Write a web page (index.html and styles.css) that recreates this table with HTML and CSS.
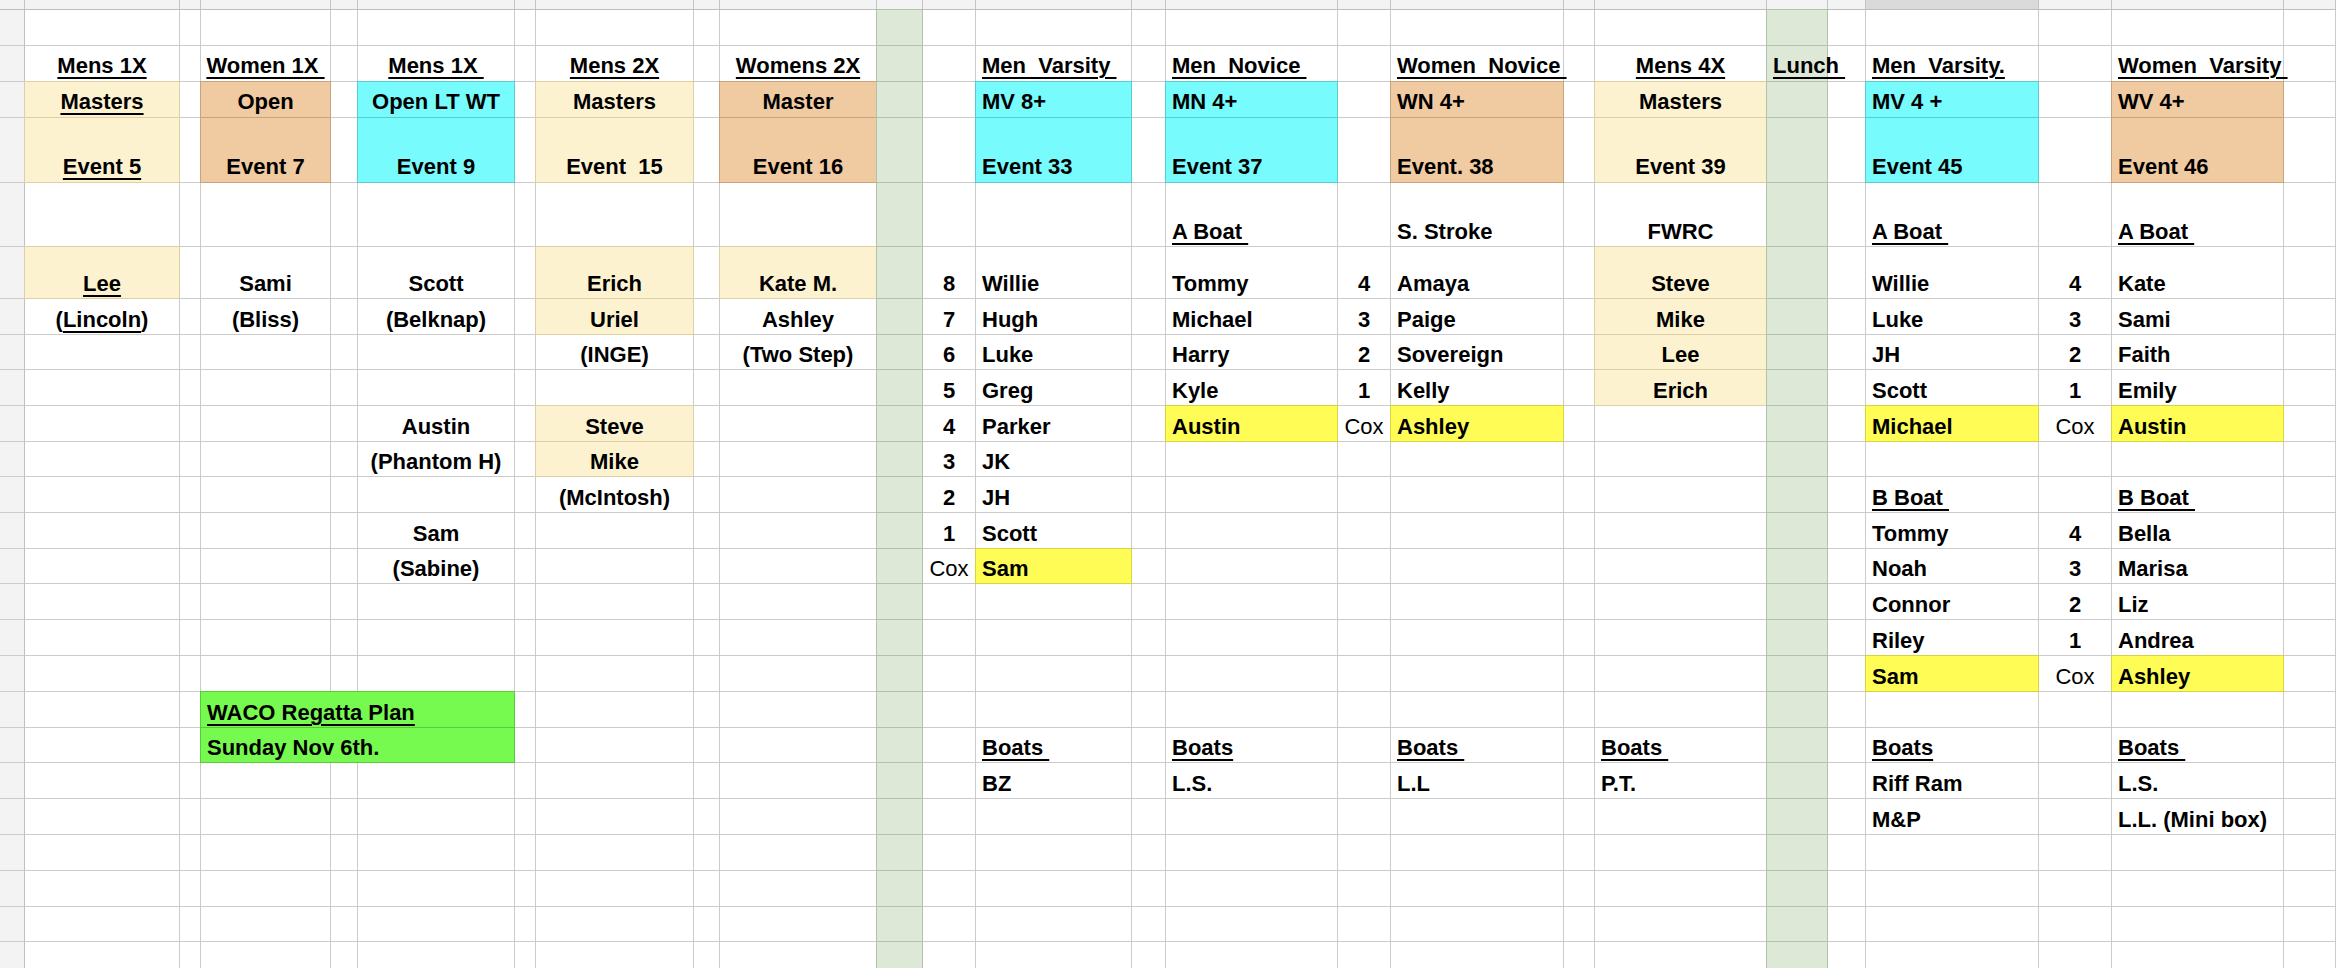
FILE: index.html
```html
<!DOCTYPE html>
<html lang="en">
<head>
<meta charset="utf-8">
<title>WACO Regatta Plan</title>
<link rel="stylesheet" href="styles.css">
</head>
<body>
<div class="sheet">
  <div class="row hd">
    <div class="c hc"></div><div class="c hc"></div><div class="c hc"></div><div class="c hc"></div><div class="c hc"></div><div class="c hc"></div><div class="c hc"></div><div class="c hc"></div><div class="c hc"></div><div class="c hc"></div><div class="c hc"></div><div class="c hc"></div><div class="c hc"></div><div class="c hc"></div><div class="c hc"></div><div class="c hc"></div><div class="c hc"></div><div class="c hc"></div><div class="c hc"></div><div class="c hc"></div><div class="c hc"></div><div class="c hc sel"></div><div class="c hc"></div><div class="c hc"></div><div class="c hc"></div>
  </div>
  <div class="row">
    <div class="c rh"></div><div class="c"></div><div class="c"></div><div class="c"></div><div class="c"></div><div class="c"></div><div class="c"></div><div class="c"></div><div class="c"></div><div class="c"></div><div class="c lg"></div><div class="c"></div><div class="c"></div><div class="c"></div><div class="c"></div><div class="c"></div><div class="c"></div><div class="c"></div><div class="c"></div><div class="c lg"></div><div class="c"></div><div class="c"></div><div class="c"></div><div class="c"></div><div class="c"></div>
  </div>
  <div class="row top">
    <div class="c rh"></div>
    <div class="c ctr"><span class="u">Mens 1X</span></div>
    <div class="c"></div>
    <div class="c ctr"><span class="u">Women 1X </span></div>
    <div class="c"></div>
    <div class="c ctr"><span class="u">Mens 1X </span></div>
    <div class="c"></div>
    <div class="c ctr"><span class="u">Mens 2X</span></div>
    <div class="c"></div>
    <div class="c ctr"><span class="u">Womens 2X</span></div>
    <div class="c lg"></div>
    <div class="c"></div>
    <div class="c"><span class="u">Men  Varsity </span></div>
    <div class="c"></div>
    <div class="c"><span class="u">Men  Novice </span></div>
    <div class="c"></div>
    <div class="c"><span class="u">Women  Novice </span></div>
    <div class="c"></div>
    <div class="c ctr"><span class="u">Mens 4X</span></div>
    <div class="c lg"><span class="u">Lunch </span></div>
    <div class="c"></div>
    <div class="c"><span class="u">Men  Varsity.</span></div>
    <div class="c"></div>
    <div class="c"><span class="u">Women  Varsity </span></div>
    <div class="c"></div>
  </div>
  <div class="row top">
    <div class="c rh"></div>
    <div class="c ctr ly"><span class="u">Masters</span></div>
    <div class="c"></div>
    <div class="c ctr or">Open</div>
    <div class="c"></div>
    <div class="c ctr cy">Open LT WT</div>
    <div class="c"></div>
    <div class="c ctr ly">Masters</div>
    <div class="c"></div>
    <div class="c ctr or">Master</div>
    <div class="c lg"></div>
    <div class="c"></div>
    <div class="c cy">MV 8+</div>
    <div class="c"></div>
    <div class="c cy">MN 4+</div>
    <div class="c"></div>
    <div class="c or">WN 4+</div>
    <div class="c"></div>
    <div class="c ctr ly">Masters</div>
    <div class="c lg"></div>
    <div class="c"></div>
    <div class="c cy">MV 4 +</div>
    <div class="c"></div>
    <div class="c or">WV 4+</div>
    <div class="c"></div>
  </div>
  <div class="row top h65">
    <div class="c rh"></div>
    <div class="c ctr ly"><span class="u">Event 5</span></div>
    <div class="c"></div>
    <div class="c ctr or">Event 7</div>
    <div class="c"></div>
    <div class="c ctr cy">Event 9</div>
    <div class="c"></div>
    <div class="c ctr ly">Event  15</div>
    <div class="c"></div>
    <div class="c ctr or">Event 16</div>
    <div class="c lg"></div>
    <div class="c"></div>
    <div class="c cy">Event 33</div>
    <div class="c"></div>
    <div class="c cy">Event 37</div>
    <div class="c"></div>
    <div class="c or">Event. 38</div>
    <div class="c"></div>
    <div class="c ctr ly">Event 39</div>
    <div class="c lg"></div>
    <div class="c"></div>
    <div class="c cy">Event 45</div>
    <div class="c"></div>
    <div class="c or">Event 46</div>
    <div class="c"></div>
  </div>
  <div class="row h64">
    <div class="c rh"></div><div class="c"></div><div class="c"></div><div class="c"></div><div class="c"></div><div class="c"></div><div class="c"></div><div class="c"></div><div class="c"></div><div class="c"></div><div class="c lg"></div><div class="c"></div><div class="c"></div><div class="c"></div>
    <div class="c"><span class="u">A Boat </span></div>
    <div class="c"></div>
    <div class="c">S. Stroke</div>
    <div class="c"></div>
    <div class="c ctr">FWRC</div>
    <div class="c lg"></div>
    <div class="c"></div>
    <div class="c"><span class="u">A Boat </span></div>
    <div class="c"></div>
    <div class="c"><span class="u">A Boat </span></div>
    <div class="c"></div>
  </div>
  <div class="row h52">
    <div class="c rh"></div>
    <div class="c ctr ly"><span class="u">Lee</span></div>
    <div class="c"></div>
    <div class="c ctr">Sami</div>
    <div class="c"></div>
    <div class="c ctr">Scott</div>
    <div class="c"></div>
    <div class="c ctr ly">Erich</div>
    <div class="c"></div>
    <div class="c ctr ly">Kate M.</div>
    <div class="c lg"></div>
    <div class="c ctr">8</div>
    <div class="c">Willie</div>
    <div class="c"></div>
    <div class="c">Tommy</div>
    <div class="c ctr">4</div>
    <div class="c">Amaya</div>
    <div class="c"></div>
    <div class="c ctr ly">Steve</div>
    <div class="c lg"></div>
    <div class="c"></div>
    <div class="c">Willie</div>
    <div class="c ctr">4</div>
    <div class="c">Kate</div>
    <div class="c"></div>
  </div>
  <div class="row">
    <div class="c rh"></div>
    <div class="c ctr"><span>(<span class="u">Lincoln</span>)</span></div>
    <div class="c"></div>
    <div class="c ctr">(Bliss)</div>
    <div class="c"></div>
    <div class="c ctr">(Belknap)</div>
    <div class="c"></div>
    <div class="c ctr ly">Uriel</div>
    <div class="c"></div>
    <div class="c ctr">Ashley</div>
    <div class="c lg"></div>
    <div class="c ctr">7</div>
    <div class="c">Hugh</div>
    <div class="c"></div>
    <div class="c">Michael</div>
    <div class="c ctr">3</div>
    <div class="c">Paige</div>
    <div class="c"></div>
    <div class="c ctr ly">Mike</div>
    <div class="c lg"></div>
    <div class="c"></div>
    <div class="c">Luke</div>
    <div class="c ctr">3</div>
    <div class="c">Sami</div>
    <div class="c"></div>
  </div>
  <div class="row h35">
    <div class="c rh"></div><div class="c"></div><div class="c"></div><div class="c"></div><div class="c"></div><div class="c"></div><div class="c"></div>
    <div class="c ctr">(INGE)</div>
    <div class="c"></div>
    <div class="c ctr">(Two Step)</div>
    <div class="c lg"></div>
    <div class="c ctr">6</div>
    <div class="c">Luke</div>
    <div class="c"></div>
    <div class="c">Harry</div>
    <div class="c ctr">2</div>
    <div class="c">Sovereign</div>
    <div class="c"></div>
    <div class="c ctr ly">Lee</div>
    <div class="c lg"></div>
    <div class="c"></div>
    <div class="c">JH</div>
    <div class="c ctr">2</div>
    <div class="c">Faith</div>
    <div class="c"></div>
  </div>
  <div class="row">
    <div class="c rh"></div><div class="c"></div><div class="c"></div><div class="c"></div><div class="c"></div><div class="c"></div><div class="c"></div><div class="c"></div><div class="c"></div><div class="c"></div><div class="c lg"></div>
    <div class="c ctr">5</div>
    <div class="c">Greg</div>
    <div class="c"></div>
    <div class="c">Kyle</div>
    <div class="c ctr">1</div>
    <div class="c">Kelly</div>
    <div class="c"></div>
    <div class="c ctr ly">Erich</div>
    <div class="c lg"></div>
    <div class="c"></div>
    <div class="c">Scott</div>
    <div class="c ctr">1</div>
    <div class="c">Emily</div>
    <div class="c"></div>
  </div>
  <div class="row">
    <div class="c rh"></div><div class="c"></div><div class="c"></div><div class="c"></div><div class="c"></div>
    <div class="c ctr">Austin</div>
    <div class="c"></div>
    <div class="c ctr ly">Steve</div>
    <div class="c"></div><div class="c"></div><div class="c lg"></div>
    <div class="c ctr">4</div>
    <div class="c">Parker</div>
    <div class="c"></div>
    <div class="c yl">Austin</div>
    <div class="c ctr cox">Cox</div>
    <div class="c yl">Ashley</div>
    <div class="c"></div><div class="c"></div><div class="c lg"></div><div class="c"></div>
    <div class="c yl">Michael</div>
    <div class="c ctr cox">Cox</div>
    <div class="c yl">Austin</div>
    <div class="c"></div>
  </div>
  <div class="row h35">
    <div class="c rh"></div><div class="c"></div><div class="c"></div><div class="c"></div><div class="c"></div>
    <div class="c ctr">(Phantom H)</div>
    <div class="c"></div>
    <div class="c ctr ly">Mike</div>
    <div class="c"></div><div class="c"></div><div class="c lg"></div>
    <div class="c ctr">3</div>
    <div class="c">JK</div>
    <div class="c"></div><div class="c"></div><div class="c"></div><div class="c"></div><div class="c"></div><div class="c"></div><div class="c lg"></div><div class="c"></div><div class="c"></div><div class="c"></div><div class="c"></div><div class="c"></div>
  </div>
  <div class="row">
    <div class="c rh"></div><div class="c"></div><div class="c"></div><div class="c"></div><div class="c"></div><div class="c"></div><div class="c"></div>
    <div class="c ctr">(McIntosh)</div>
    <div class="c"></div><div class="c"></div><div class="c lg"></div>
    <div class="c ctr">2</div>
    <div class="c">JH</div>
    <div class="c"></div><div class="c"></div><div class="c"></div><div class="c"></div><div class="c"></div><div class="c"></div><div class="c lg"></div><div class="c"></div>
    <div class="c"><span class="u">B Boat </span></div>
    <div class="c"></div>
    <div class="c"><span class="u">B Boat </span></div>
    <div class="c"></div>
  </div>
  <div class="row">
    <div class="c rh"></div><div class="c"></div><div class="c"></div><div class="c"></div><div class="c"></div>
    <div class="c ctr">Sam</div>
    <div class="c"></div><div class="c"></div><div class="c"></div><div class="c"></div><div class="c lg"></div>
    <div class="c ctr">1</div>
    <div class="c">Scott</div>
    <div class="c"></div><div class="c"></div><div class="c"></div><div class="c"></div><div class="c"></div><div class="c"></div><div class="c lg"></div><div class="c"></div>
    <div class="c">Tommy</div>
    <div class="c ctr">4</div>
    <div class="c">Bella</div>
    <div class="c"></div>
  </div>
  <div class="row h35">
    <div class="c rh"></div><div class="c"></div><div class="c"></div><div class="c"></div><div class="c"></div>
    <div class="c ctr">(Sabine)</div>
    <div class="c"></div><div class="c"></div><div class="c"></div><div class="c"></div><div class="c lg"></div>
    <div class="c ctr cox">Cox</div>
    <div class="c yl">Sam</div>
    <div class="c"></div><div class="c"></div><div class="c"></div><div class="c"></div><div class="c"></div><div class="c"></div><div class="c lg"></div><div class="c"></div>
    <div class="c">Noah</div>
    <div class="c ctr">3</div>
    <div class="c">Marisa</div>
    <div class="c"></div>
  </div>
  <div class="row">
    <div class="c rh"></div><div class="c"></div><div class="c"></div><div class="c"></div><div class="c"></div><div class="c"></div><div class="c"></div><div class="c"></div><div class="c"></div><div class="c"></div><div class="c lg"></div><div class="c"></div><div class="c"></div><div class="c"></div><div class="c"></div><div class="c"></div><div class="c"></div><div class="c"></div><div class="c"></div><div class="c lg"></div><div class="c"></div>
    <div class="c">Connor</div>
    <div class="c ctr">2</div>
    <div class="c">Liz</div>
    <div class="c"></div>
  </div>
  <div class="row">
    <div class="c rh"></div><div class="c"></div><div class="c"></div><div class="c"></div><div class="c"></div><div class="c"></div><div class="c"></div><div class="c"></div><div class="c"></div><div class="c"></div><div class="c lg"></div><div class="c"></div><div class="c"></div><div class="c"></div><div class="c"></div><div class="c"></div><div class="c"></div><div class="c"></div><div class="c"></div><div class="c lg"></div><div class="c"></div>
    <div class="c">Riley</div>
    <div class="c ctr">1</div>
    <div class="c">Andrea</div>
    <div class="c"></div>
  </div>
  <div class="row">
    <div class="c rh"></div><div class="c"></div><div class="c"></div><div class="c"></div><div class="c"></div><div class="c"></div><div class="c"></div><div class="c"></div><div class="c"></div><div class="c"></div><div class="c lg"></div><div class="c"></div><div class="c"></div><div class="c"></div><div class="c"></div><div class="c"></div><div class="c"></div><div class="c"></div><div class="c"></div><div class="c lg"></div><div class="c"></div>
    <div class="c yl">Sam</div>
    <div class="c ctr cox">Cox</div>
    <div class="c yl">Ashley</div>
    <div class="c"></div>
  </div>
  <div class="row">
    <div class="c rh"></div><div class="c"></div><div class="c"></div>
    <div class="c gr span3"><span class="u">WACO Regatta Plan</span></div>
    <div class="c"></div><div class="c"></div><div class="c"></div><div class="c"></div><div class="c lg"></div><div class="c"></div><div class="c"></div><div class="c"></div><div class="c"></div><div class="c"></div><div class="c"></div><div class="c"></div><div class="c"></div><div class="c lg"></div><div class="c"></div><div class="c"></div><div class="c"></div><div class="c"></div><div class="c"></div>
  </div>
  <div class="row h35">
    <div class="c rh"></div><div class="c"></div><div class="c"></div>
    <div class="c gr span3">Sunday Nov 6th.</div>
    <div class="c"></div><div class="c"></div><div class="c"></div><div class="c"></div><div class="c lg"></div><div class="c"></div>
    <div class="c"><span class="u">Boats </span></div>
    <div class="c"></div>
    <div class="c"><span class="u">Boats</span></div>
    <div class="c"></div>
    <div class="c"><span class="u">Boats </span></div>
    <div class="c"></div>
    <div class="c"><span class="u">Boats </span></div>
    <div class="c lg"></div><div class="c"></div>
    <div class="c"><span class="u">Boats</span></div>
    <div class="c"></div>
    <div class="c"><span class="u">Boats </span></div>
    <div class="c"></div>
  </div>
  <div class="row">
    <div class="c rh"></div><div class="c"></div><div class="c"></div><div class="c"></div><div class="c"></div><div class="c"></div><div class="c"></div><div class="c"></div><div class="c"></div><div class="c"></div><div class="c lg"></div><div class="c"></div>
    <div class="c">BZ</div>
    <div class="c"></div>
    <div class="c">L.S.</div>
    <div class="c"></div>
    <div class="c">L.L</div>
    <div class="c"></div>
    <div class="c">P.T.</div>
    <div class="c lg"></div><div class="c"></div>
    <div class="c">Riff Ram</div>
    <div class="c"></div>
    <div class="c">L.S.</div>
    <div class="c"></div>
  </div>
  <div class="row">
    <div class="c rh"></div><div class="c"></div><div class="c"></div><div class="c"></div><div class="c"></div><div class="c"></div><div class="c"></div><div class="c"></div><div class="c"></div><div class="c"></div><div class="c lg"></div><div class="c"></div><div class="c"></div><div class="c"></div><div class="c"></div><div class="c"></div><div class="c"></div><div class="c"></div><div class="c"></div><div class="c lg"></div><div class="c"></div>
    <div class="c">M&amp;P</div>
    <div class="c"></div>
    <div class="c">L.L. (Mini box)</div>
    <div class="c"></div>
  </div>
  <div class="row">
    <div class="c rh"></div><div class="c"></div><div class="c"></div><div class="c"></div><div class="c"></div><div class="c"></div><div class="c"></div><div class="c"></div><div class="c"></div><div class="c"></div><div class="c lg"></div><div class="c"></div><div class="c"></div><div class="c"></div><div class="c"></div><div class="c"></div><div class="c"></div><div class="c"></div><div class="c"></div><div class="c lg"></div><div class="c"></div><div class="c"></div><div class="c"></div><div class="c"></div><div class="c"></div>
  </div>
  <div class="row">
    <div class="c rh"></div><div class="c"></div><div class="c"></div><div class="c"></div><div class="c"></div><div class="c"></div><div class="c"></div><div class="c"></div><div class="c"></div><div class="c"></div><div class="c lg"></div><div class="c"></div><div class="c"></div><div class="c"></div><div class="c"></div><div class="c"></div><div class="c"></div><div class="c"></div><div class="c"></div><div class="c lg"></div><div class="c"></div><div class="c"></div><div class="c"></div><div class="c"></div><div class="c"></div>
  </div>
  <div class="row h35">
    <div class="c rh"></div><div class="c"></div><div class="c"></div><div class="c"></div><div class="c"></div><div class="c"></div><div class="c"></div><div class="c"></div><div class="c"></div><div class="c"></div><div class="c lg"></div><div class="c"></div><div class="c"></div><div class="c"></div><div class="c"></div><div class="c"></div><div class="c"></div><div class="c"></div><div class="c"></div><div class="c lg"></div><div class="c"></div><div class="c"></div><div class="c"></div><div class="c"></div><div class="c"></div>
  </div>
  <div class="row">
    <div class="c rh"></div><div class="c"></div><div class="c"></div><div class="c"></div><div class="c"></div><div class="c"></div><div class="c"></div><div class="c"></div><div class="c"></div><div class="c"></div><div class="c lg"></div><div class="c"></div><div class="c"></div><div class="c"></div><div class="c"></div><div class="c"></div><div class="c"></div><div class="c"></div><div class="c"></div><div class="c lg"></div><div class="c"></div><div class="c"></div><div class="c"></div><div class="c"></div><div class="c"></div>
  </div>
</div>
</body>
</html>
```

FILE: styles.css
```css
html, body {
  margin: 0;
  padding: 0;
  background: #ffffff;
  overflow: hidden;
}

.sheet {
  width: 2336px;
  font-family: "Liberation Sans", Arial, sans-serif;
  font-weight: bold;
  font-size: 22px;
  color: #000;
}

.row {
  display: grid;
  grid-template-columns: 25px 155px 21px 130px 27px 157px 21px 158px 26px 157px 46px 53px 156px 34px 172px 53px 173px 31px 172px 61px 38px 173px 73px 172px 52px;
  height: 36px;
}

.row.hd { height: 10px; }
.row.h35 { height: 35px; }
.row.h52 { height: 52px; }
.row.h64 { height: 64px; }
.row.h65 { height: 65px; }

.c {
  box-sizing: border-box;
  border-right: 1px solid #cbcbcb;
  border-bottom: 1px solid #cbcbcb;
  display: flex;
  align-items: flex-end;
  justify-content: flex-start;
  padding: 0 5px 2px 6px;
  line-height: 25px;
  white-space: pre;
  min-width: 0;
}

.row.top .c { padding-bottom: 3px; }

.ctr {
  justify-content: center;
  padding-left: 2px;
  padding-right: 2px;
}

.span3 { grid-column: span 3; }

.hc {
  background: #f3f3f3;
  border-right-color: #c4c4c4;
  border-bottom-color: #bdbdbd;
}

.hc.sel { background: #dadada; }

.rh {
  background: #f3f3f3;
  border-right-color: #c0c0c0;
}

.cox { font-weight: normal; }

.u {
  text-decoration: underline;
  text-decoration-thickness: 2px;
  text-underline-offset: 4px;
}

.ly {
  background: #fdf2d0;
  border-color: #ddcfa6;
  box-shadow: -1px 0 0 #ddcfa6, 0 -1px 0 #ddcfa6, -1px -1px 0 #ddcfa6;
}

.or {
  background: #f0caa0;
  border-color: #c9a27e;
  box-shadow: -1px 0 0 #c9a27e, 0 -1px 0 #c9a27e, -1px -1px 0 #c9a27e;
}

.cy {
  background: #77fbfd;
  border-color: #58ccce;
  box-shadow: -1px 0 0 #58ccce, 0 -1px 0 #58ccce, -1px -1px 0 #58ccce;
}

.yl {
  background: #fffd55;
  border-color: #d6d443;
  box-shadow: -1px 0 0 #d6d443, 0 -1px 0 #d6d443, -1px -1px 0 #d6d443;
}

.gr {
  background: #76fa4f;
  border-color: #5bcb3c;
  box-shadow: -1px 0 0 #5bcb3c, 0 -1px 0 #5bcb3c, -1px -1px 0 #5bcb3c;
}

.lg {
  background: #dde8d6;
  border-color: #b2c1aa;
  box-shadow: -1px 0 0 #b2c1aa, 0 -1px 0 #b2c1aa, -1px -1px 0 #b2c1aa;
}
```
